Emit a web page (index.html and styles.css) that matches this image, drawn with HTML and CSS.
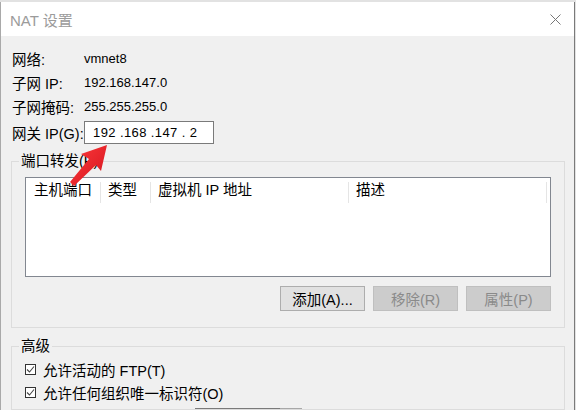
FILE: index.html
```html
<!DOCTYPE html>
<html lang="zh-CN">
<head>
  <meta charset="UTF-8" />
  <title>NAT 设置</title>
  <link rel="stylesheet" href="styles.css">
</head>
<body>
  <div class="dialog">
    <div class="titlebar">
      <span class="title">NAT 设置</span>
      <svg class="close" width="11" height="11" viewBox="0 0 11 11">
        <path d="M0.5 0.5 L10.5 10.5 M10.5 0.5 L0.5 10.5" stroke="#777" stroke-width="1" fill="none" />
      </svg>
    </div>

    <div class="info">
      <span class="lbl">网络:</span><span class="val">vmnet8</span>
      <span class="lbl">子网 IP:</span><span class="val">192.168.147.0</span>
      <span class="lbl">子网掩码:</span><span class="val">255.255.255.0</span>
      <span class="lbl lbl-ip">网关 IP(G):</span><div class="ipbox">192 .168 .147 . 2</div>
    </div>

    <!-- 端口转发 -->
    <fieldset class="group">
      <legend>端口转发(P)</legend>
      <div class="listview">
        <div class="lv-head">
          <span class="col c1">主机端口</span>
          <span class="col c2">类型</span>
          <span class="col c3">虚拟机 IP 地址</span>
          <span class="col c4">描述</span>
        </div>
      </div>
      <div class="btns">
        <button class="btn">添加(A)...</button>
        <button class="btn" disabled>移除(R)</button>
        <button class="btn" disabled>属性(P)</button>
      </div>
    </fieldset>

    <!-- 高级 -->
    <fieldset class="group adv">
      <legend>高级</legend>
      <div class="chk-row"><span class="chk"><svg width="9" height="9" viewBox="0 0 9 9"><path d="M1 4.5 L3.5 7 L8 1.5" stroke="#444" stroke-width="1.1" fill="none" /></svg></span>允许活动的 FTP(T)</div>
      <div class="chk-row"><span class="chk"><svg width="9" height="9" viewBox="0 0 9 9"><path d="M1 4.5 L3.5 7 L8 1.5" stroke="#444" stroke-width="1.1" fill="none" /></svg></span>允许任何组织唯一标识符(O)</div>
      <div class="cut-edge"></div>
    </fieldset>

    <svg class="arrow" width="60" height="60" viewBox="0 0 60 60">
      <defs>
        <linearGradient id="red" x1="0" y1="0" x2="1" y2="1">
          <stop offset="0" stop-color="#ff3b3b" />
          <stop offset="1" stop-color="#d3141f" />
        </linearGradient>
      </defs>
      <polygon points="47,10 41,36 36,30 14,51 10,47 29,24 21,19" fill="url(#red)" />
    </svg>
  </div>
</body>
</html>
```

FILE: styles.css
```css
/* NAT 设置 */
html,
body {
  margin: 0;
  padding: 0;
  height: 410px;
  overflow: hidden;
}

body {
  background-color: #e2e2e2;
  color: #000000;
  font-family: "Liberation Sans", "Noto Sans CJK SC", sans-serif;
  font-size: 14.5px;
}

.dialog {
  position: relative;
  margin-top: 2px;
  width: 573px;
  height: 420px;
  background-color: #f0f0f0;
  border-left: 1px solid #a9a9a9;
  border-right: 1px solid #7a7a7a;
}

.titlebar {
  height: 34px;
  background-color: #ffffff;
  display: flex;
  align-items: center;
  justify-content: space-between;
  padding: 0 13px 0 9px;
}

.title {
  color: #9b9b9b;
  font-size: 15px;
}

.close {
  display: block;
}

.info {
  display: grid;
  grid-template-columns: 72px auto;
  grid-template-rows: 24px 24px 24px 26px;
  align-items: center;
  padding: 10px 0 0 11px;
}

.val {
  font-size: 13px;
}

.lbl-ip {
  padding-top: 3px;
}

.ipbox {
  margin-top: 3px;
  width: 130px;
  height: 23px;
  box-sizing: border-box;
  border: 1px solid #7a7a7a;
  background-color: #ffffff;
  padding-left: 8px;
  font-size: 13px;
  line-height: 21px;
  letter-spacing: 0.4px;
  white-space: pre;
}

.group {
  margin: 7px 0 0 10px;
  width: 554px;
  box-sizing: border-box;
  border: 1px solid #dcdcdc;
  padding: 6px 13px 16px 13px;
  min-width: 0;
}

.group legend {
  padding: 0 2px;
  margin-left: -6px;
  line-height: 20px;
}

.listview {
  height: 100px;
  box-sizing: border-box;
  border: 1px solid #828790;
  background-color: #ffffff;
}

.lv-head {
  display: flex;
  padding-top: 4px;
}

.col {
  box-sizing: border-box;
  height: 21px;
  line-height: 17px;
  padding-left: 7px;
  border-right: 1px solid #e5e5e5;
}

.c1 {
  width: 75px;
  padding-left: 8px;
}

.c2 {
  width: 50px;
}

.c3 {
  width: 198px;
}

.c4 {
  width: 198px;
}

.btns {
  display: flex;
  justify-content: flex-end;
  gap: 8px;
  margin-top: 9px;
}

.btn {
  width: 85px;
  height: 25px;
  box-sizing: border-box;
  background-color: #e1e1e1;
  border: 1px solid #adadad;
  font-family: "Liberation Sans", "Noto Sans CJK SC", sans-serif;
  font-size: 14.5px;
  color: #000000;
  padding: 0;
}

.btn:disabled {
  background-color: #cccccc;
  border-color: #bfbfbf;
  color: #8a8a8a;
}

.adv {
  margin-top: 8px;
  padding-top: 2px;
  padding-bottom: 0;
}

.chk-row {
  display: flex;
  align-items: center;
  height: 23px;
}

.chk {
  width: 11px;
  height: 11px;
  box-sizing: border-box;
  border: 1px solid #333333;
  background-color: #ffffff;
  margin-right: 7px;
  display: flex;
  align-items: center;
  justify-content: center;
}

.chk svg {
  display: block;
}

.cut-edge {
  margin: 4px 0 0 170px;
  width: 107px;
  height: 1px;
  background: linear-gradient(to right, #7a7a7a 0, #7a7a7a 85px, #a8a8a8 85px);
}

.arrow {
  position: absolute;
  left: 59px;
  top: 133px;
}
```
